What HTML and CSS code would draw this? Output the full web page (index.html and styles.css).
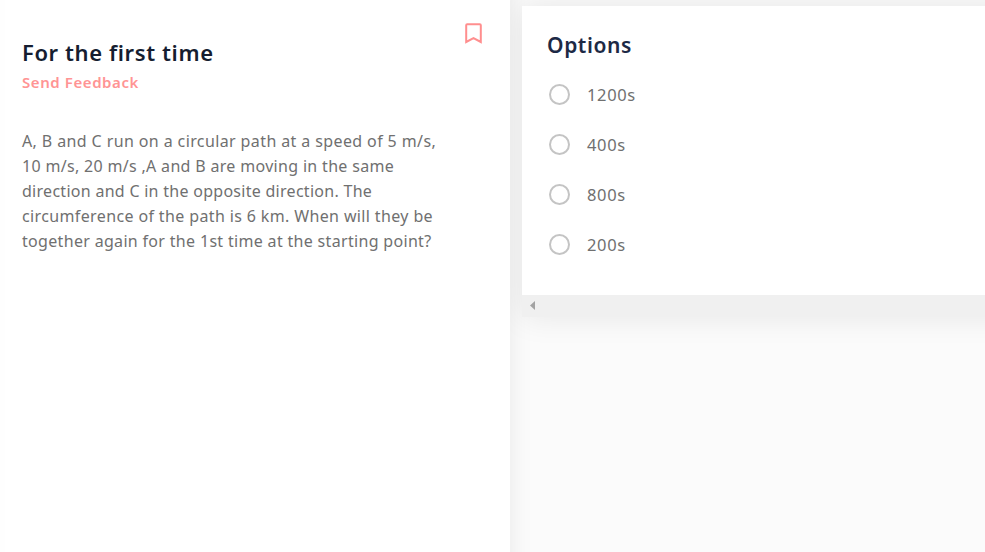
FILE: index.html
```html
<!DOCTYPE html>
<html lang="en">
<head>
<meta charset="utf-8">
<title>For the first time</title>
<link rel="stylesheet" href="styles.css">
</head>
<body>
<main class="layout">
  <section class="question">
    <div class="question-copy">
      <h1 class="title">For the first time</h1>
      <a class="feedback">Send Feedback</a>
      <p class="text"><span class="line l1">A, B and C run on a circular path at a speed of 5 m/s,</span> <span class="line l2">10 m/s, 20 m/s ,A and B are moving in the same</span> <span class="line l3">direction and C in the opposite direction. The</span> <span class="line l4">circumference of the path is 6 km. When will they be</span> <span class="line l5">together again for the 1st time at the starting point?</span></p>
    </div>
    <svg class="bookmark" width="17" height="21" viewBox="0 0 17 21"><path d="M1.2 19V2.2Q1.2 1.2 2.2 1.2H14.8Q15.8 1.2 15.8 2.2V19L8.5 15.2Z" fill="none" stroke="#ff8e8e" stroke-width="2"/></svg>
  </section>
  <section class="answers">
    <div class="card">
      <div class="options">
        <h2 class="heading">Options</h2>
        <label class="option"><span class="radio"></span><span class="value">1200s</span></label>
        <label class="option"><span class="radio"></span><span class="value">400s</span></label>
        <label class="option"><span class="radio"></span><span class="value">800s</span></label>
        <label class="option"><span class="radio"></span><span class="value">200s</span></label>
      </div>
      <div class="scrollbar"><svg width="5" height="9" viewBox="0 0 5 9"><path d="M5 0V9L0 4.5Z" fill="#a3a3a3"/></svg></div>
    </div>
  </section>
</main>
</body>
</html>
```
FILE: styles.css
```css
* { box-sizing: border-box; }
body { margin: 0; background: #fbfbfb; font-family: "Noto Sans", sans-serif; overflow: hidden; }
h1, h2, p { margin: 0; }
.layout { display: flex; height: 552px; overflow: hidden; }
.question { position: relative; z-index: 1; display: flex; justify-content: space-between; align-items: flex-start; flex: 0 0 510px; padding: 23px 28px 0 17px; border-left: 5px solid #fefefe; background: #fff; }
.question-copy { padding-top: 13px; }
.title { font-size: 22px; line-height: 32px; font-weight: 600; letter-spacing: .6px; font-variant-ligatures: none; color: #151d30; white-space: nowrap; }
.feedback { display: block; margin-top: 3px; font-size: 15px; line-height: 22px; font-weight: 600; letter-spacing: .58px; color: #ff9494; }
.text { margin-top: 36px; font-size: 16px; line-height: 25px; color: #707070; }
.line { display: block; width: max-content; white-space: nowrap; }
.l1 { letter-spacing: .39px; }
.l2 { letter-spacing: .32px; }
.l3 { letter-spacing: .28px; }
.l4 { letter-spacing: .37px; }
.l5 { letter-spacing: .32px; }
.bookmark { flex: none; }
.answers { flex: 1; min-width: 0; padding: 6px 0 0 12px; box-shadow: inset 30px 0 24px -30px rgba(0,0,0,.08); }
.card { width: 600px; background: #fff; box-shadow: 0 0 30px rgba(0,0,0,.085); }
.options { height: 289px; padding: 23px 25px 0; }
.heading { margin-bottom: 9px; font-size: 21px; line-height: 32px; font-weight: 600; letter-spacing: .6px; color: #1d2945; }
.option { display: flex; align-items: center; height: 50px; padding-left: 2px; gap: 17px; }
.heading + .option { margin-top: -1px; }
.radio { width: 21px; height: 21px; border: 2px solid #c4c4c4; border-radius: 50%; }
.value { padding-top: 1px; font-size: 16.5px; letter-spacing: .65px; color: #707070; }
.scrollbar { display: flex; align-items: flex-start; height: 22px; padding: 6px 8px; background: #f0f0f0; }
```
